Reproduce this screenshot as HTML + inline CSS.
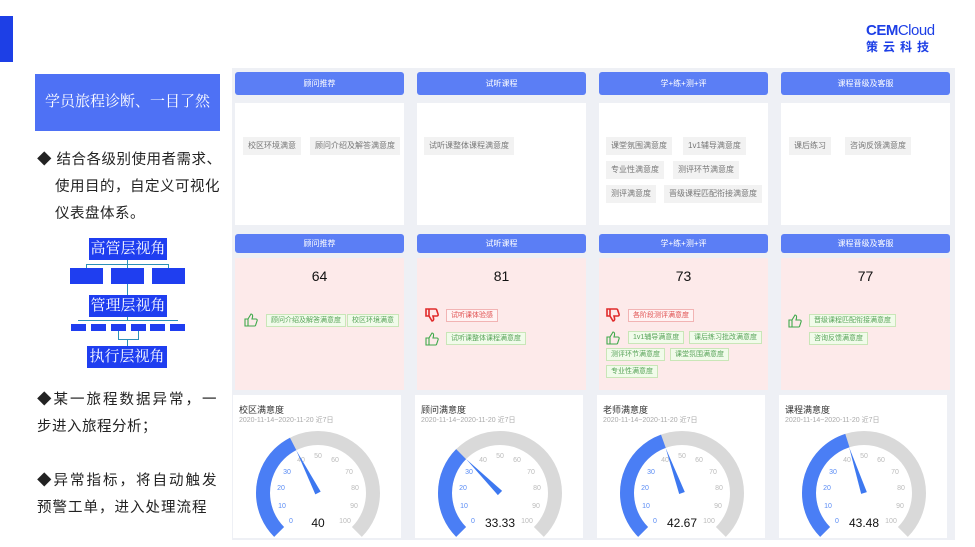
<!DOCTYPE html><html><head><meta charset="utf-8"><style>
*{margin:0;padding:0;box-sizing:border-box}
body{width:975px;height:547px;position:relative;background:#fff;font-family:"Liberation Sans","Noto Sans CJK SC",sans-serif;overflow:hidden}
.a{position:absolute}
.hd{position:absolute;height:23px;background:#5b7ef5;border-radius:3px;color:#fff;font-size:8px;text-align:center;line-height:23px}
.hd2{height:19px;line-height:19px}
.wc{position:absolute;background:#fff}
.pc{position:absolute;background:#fdeaea}
.tg{position:absolute;background:#f2f2f2;color:#777;font-size:8px;height:18px;line-height:18px;padding:0 5px;white-space:nowrap}
.gt{position:absolute;background:#f1fbea;border:1px solid #c9e6b8;color:#59a45a;font-size:7px;height:13px;line-height:11px;padding:0 4px;white-space:nowrap}
.rt{position:absolute;background:#fff3f3;border:1px solid #f2b4b4;color:#e05050;font-size:7px;height:13px;line-height:11px;padding:0 4px;white-space:nowrap}
.num{position:absolute;width:169px;text-align:center;font-size:14px;color:#111}
.lt{position:absolute;font-size:14.5px;color:#222;letter-spacing:0.5px;white-space:nowrap}
.ob{position:absolute;background:#1f3ef0;color:#fff;font-family:"Liberation Serif","Noto Serif CJK SC",serif;font-size:15px;text-align:center}
.sb{position:absolute;background:#1f3ef0}
.ln{position:absolute;background:#2a8fb8}
.gc{position:absolute;background:#fff;width:168px;height:143px}
.gtit{position:absolute;left:6px;top:8px;font-size:9px;color:#333}
.gd{position:absolute;left:6px;top:20px;font-size:7px;color:#aaa}
</style></head><body>
<div class="a" style="left:0;top:16px;width:13px;height:46px;background:#1d3fe6"></div>
<div class="a" style="left:866px;top:22px;font-size:15px;font-weight:bold;color:#1d3fe6;letter-spacing:-0.5px">CEM<span style="font-weight:normal">Cloud</span></div>
<div class="a" style="left:866px;top:38px;font-size:12px;color:#1d3fe6;letter-spacing:5px;font-weight:bold">策云科技</div>

<div class="a" style="left:35px;top:74px;width:185px;height:57px;background:#4e71f5;color:#fff;font-size:15px;line-height:57px;text-align:center;font-family:'Liberation Serif','Noto Serif CJK SC',serif">学员旅程诊断、一目了然</div>

<div class="lt" style="left:37px;top:148px">◆ 结合各级别使用者需求、</div>
<div class="lt" style="left:55px;top:175px">使用目的，自定义可视化</div>
<div class="lt" style="left:55px;top:202px">仪表盘体系。</div>
<div class="lt" style="left:37px;top:388px;letter-spacing:2px">◆某一旅程数据异常，一</div>
<div class="lt" style="left:37px;top:415px">步进入旅程分析；</div>
<div class="lt" style="left:37px;top:469px;letter-spacing:2px">◆异常指标，将自动触发</div>
<div class="lt" style="left:37px;top:496px;letter-spacing:1px">预警工单，进入处理流程</div>

<div class="ln" style="left:86px;top:264px;width:83px;height:1px"></div>
<div class="ln" style="left:86px;top:264px;width:1px;height:5px"></div>
<div class="ln" style="left:127px;top:258px;width:1px;height:11px"></div>
<div class="ln" style="left:168px;top:264px;width:1px;height:5px"></div>
<div class="ln" style="left:127px;top:283px;width:1px;height:13px"></div>
<div class="ln" style="left:78px;top:320px;width:100px;height:1px"></div>
<div class="ln" style="left:127px;top:316px;width:1px;height:5px"></div>
<div class="ln" style="left:118px;top:331px;width:1px;height:8px"></div>
<div class="ln" style="left:138px;top:331px;width:1px;height:8px"></div>
<div class="ln" style="left:118px;top:339px;width:21px;height:1px"></div>
<div class="ln" style="left:127px;top:339px;width:1px;height:8px"></div>
<div class="ob" style="left:89px;top:238px;width:78px;height:22px;line-height:22px">高管层视角</div>
<div class="sb" style="left:70px;top:268px;width:33px;height:16px"></div>
<div class="sb" style="left:111px;top:268px;width:33px;height:16px"></div>
<div class="sb" style="left:152px;top:268px;width:33px;height:16px"></div>
<div class="ob" style="left:89px;top:295px;width:78px;height:22px;line-height:22px">管理层视角</div>
<div class="sb" style="left:71px;top:324px;width:15px;height:7px"></div>
<div class="sb" style="left:91px;top:324px;width:15px;height:7px"></div>
<div class="sb" style="left:111px;top:324px;width:15px;height:7px"></div>
<div class="sb" style="left:131px;top:324px;width:15px;height:7px"></div>
<div class="sb" style="left:150px;top:324px;width:15px;height:7px"></div>
<div class="sb" style="left:170px;top:324px;width:15px;height:7px"></div>
<div class="ob" style="left:87px;top:346px;width:80px;height:22px;line-height:22px">执行层视角</div>

<div class="a" style="left:232px;top:68px;width:723px;height:472px;background:#eef0f5"></div>
<div class="hd" style="left:235px;top:72px;width:169px">顾问推荐</div>
<div class="hd" style="left:417px;top:72px;width:169px">试听课程</div>
<div class="hd" style="left:599px;top:72px;width:169px">学+练+测+评</div>
<div class="hd" style="left:781px;top:72px;width:169px">课程晋级及客服</div>
<div class="wc" style="left:235px;top:103px;width:169px;height:122px"></div>
<div class="wc" style="left:417px;top:103px;width:169px;height:122px"></div>
<div class="wc" style="left:599px;top:103px;width:169px;height:122px"></div>
<div class="wc" style="left:781px;top:103px;width:169px;height:122px"></div>
<div class="tg" style="left:243px;top:137px">校区环境满意</div>
<div class="tg" style="left:310px;top:137px">顾问介绍及解答满意度</div>
<div class="tg" style="left:424px;top:137px">试听课整体课程满意度</div>
<div class="tg" style="left:606px;top:137px">课堂氛围满意度</div>
<div class="tg" style="left:683px;top:137px">1v1辅导满意度</div>
<div class="tg" style="left:606px;top:161px">专业性满意度</div>
<div class="tg" style="left:673px;top:161px">测评环节满意度</div>
<div class="tg" style="left:606px;top:185px">测评满意度</div>
<div class="tg" style="left:664px;top:185px">晋级课程匹配衔接满意度</div>
<div class="tg" style="left:789px;top:137px">课后练习</div>
<div class="tg" style="left:845px;top:137px">咨询反馈满意度</div>

<div class="hd hd2" style="left:235px;top:234px;width:169px">顾问推荐</div>
<div class="hd hd2" style="left:417px;top:234px;width:169px">试听课程</div>
<div class="hd hd2" style="left:599px;top:234px;width:169px">学+练+测+评</div>
<div class="hd hd2" style="left:781px;top:234px;width:169px">课程晋级及客服</div>
<div class="pc" style="left:235px;top:258px;width:169px;height:132px"></div>
<div class="pc" style="left:417px;top:258px;width:169px;height:132px"></div>
<div class="pc" style="left:599px;top:258px;width:169px;height:132px"></div>
<div class="pc" style="left:781px;top:258px;width:169px;height:132px"></div>
<div class="num" style="left:235px;top:268px">64</div>
<div class="num" style="left:417px;top:268px">81</div>
<div class="num" style="left:599px;top:268px">73</div>
<div class="num" style="left:781px;top:268px">77</div>

<svg class="a" style="left:0;top:0" width="975" height="547">
<defs>
<g id="up"><path d="M1 6h3v7H1z M4 6l3-5c1 0 2 1 1.5 3L8 6h4c1 0 1.5 1 1 2l-1.5 4.5c-.3.5-.7.5-1 .5H4" fill="none" stroke="#3ea84a" stroke-width="1.1"/></g>
<g id="dn"><path d="M1 1h3v7H1z M4 8l3 5c1 0 2-1 1.5-3L8 8h4c1 0 1.5-1 1-2L11.5 1.5C11.2 1 10.8 1 10.5 1H4" fill="none" stroke="#e02a2a" stroke-width="1.6"/></g>
<g id="lb" font-family="Liberation Sans" font-size="7" text-anchor="middle">
<text x="-27" y="30" fill="#5a8cf5">0</text><text x="-36" y="15" fill="#5a8cf5">10</text><text x="-37" y="-3" fill="#5a8cf5">20</text><text x="-31" y="-19" fill="#5a8cf5">30</text>
<text x="-17" y="-31" fill="#bbb">40</text><text x="0" y="-35" fill="#bbb">50</text><text x="17" y="-31" fill="#bbb">60</text><text x="31" y="-19" fill="#bbb">70</text>
<text x="37" y="-3" fill="#bbb">80</text><text x="36" y="15" fill="#bbb">90</text><text x="27" y="30" fill="#bbb">100</text>
</g>
</defs>
<use href="#up" x="244" y="313"/>
<use href="#dn" x="425" y="308"/>
<use href="#up" x="425" y="332"/>
<use href="#dn" x="606" y="308"/>
<use href="#up" x="606" y="331"/>
<use href="#up" x="788" y="314"/>
</svg>
<div class="gt" style="left:266px;top:314px">顾问介绍及解答满意度</div>
<div class="gt" style="left:347px;top:314px">校区环境满意</div>
<div class="rt" style="left:446px;top:309px">试听课体验感</div>
<div class="gt" style="left:446px;top:332px">试听课整体课程满意度</div>
<div class="rt" style="left:628px;top:309px">各阶段测评满意度</div>
<div class="gt" style="left:628px;top:331px">1v1辅导满意度</div>
<div class="gt" style="left:689px;top:331px">课后练习批改满意度</div>
<div class="gt" style="left:606px;top:348px">测评环节满意度</div>
<div class="gt" style="left:670px;top:348px">课堂氛围满意度</div>
<div class="gt" style="left:606px;top:365px">专业性满意度</div>
<div class="gt" style="left:809px;top:314px">晋级课程匹配衔接满意度</div>
<div class="gt" style="left:809px;top:332px">咨询反馈满意度</div>

<div class="gc" style="left:233px;top:395px"><div class="gtit">校区满意度</div><div class="gd">2020-11-14~2020-11-20 近7日</div></div>
<div class="gc" style="left:415px;top:395px"><div class="gtit">顾问满意度</div><div class="gd">2020-11-14~2020-11-20 近7日</div></div>
<div class="gc" style="left:597px;top:395px"><div class="gtit">老师满意度</div><div class="gd">2020-11-14~2020-11-20 近7日</div></div>
<div class="gc" style="left:779px;top:395px"><div class="gtit">课程满意度</div><div class="gd">2020-11-14~2020-11-20 近7日</div></div>

<svg class="a" style="left:0;top:0" width="975" height="547" font-family="Liberation Sans">
<g transform="translate(318,493)">
<circle r="55" fill="none" stroke="#d9d9d9" stroke-width="14" stroke-dasharray="259 400" transform="rotate(135)"/>
<circle r="55" fill="none" stroke="#4a7ef5" stroke-width="14" stroke-dasharray="103.7 400" transform="rotate(135)"/>
<use href="#lb"/>
<polygon points="-3,0 3,0 0,-48" fill="#3d78f0" transform="rotate(-27)"/>
<text x="0" y="34" font-size="12" fill="#111" text-anchor="middle">40</text>
</g>
<g transform="translate(500,493)">
<circle r="55" fill="none" stroke="#d9d9d9" stroke-width="14" stroke-dasharray="259 400" transform="rotate(135)"/>
<circle r="55" fill="none" stroke="#4a7ef5" stroke-width="14" stroke-dasharray="86.3 400" transform="rotate(135)"/>
<use href="#lb"/>
<polygon points="-3,0 3,0 0,-48" fill="#3d78f0" transform="rotate(-45)"/>
<text x="0" y="34" font-size="12" fill="#111" text-anchor="middle">33.33</text>
</g>
<g transform="translate(682,493)">
<circle r="55" fill="none" stroke="#d9d9d9" stroke-width="14" stroke-dasharray="259 400" transform="rotate(135)"/>
<circle r="55" fill="none" stroke="#4a7ef5" stroke-width="14" stroke-dasharray="110.5 400" transform="rotate(135)"/>
<use href="#lb"/>
<polygon points="-3,0 3,0 0,-48" fill="#3d78f0" transform="rotate(-20)"/>
<text x="0" y="34" font-size="12" fill="#111" text-anchor="middle">42.67</text>
</g>
<g transform="translate(864,493)">
<circle r="55" fill="none" stroke="#d9d9d9" stroke-width="14" stroke-dasharray="259 400" transform="rotate(135)"/>
<circle r="55" fill="none" stroke="#4a7ef5" stroke-width="14" stroke-dasharray="112.6 400" transform="rotate(135)"/>
<use href="#lb"/>
<polygon points="-3,0 3,0 0,-48" fill="#3d78f0" transform="rotate(-18)"/>
<text x="0" y="34" font-size="12" fill="#111" text-anchor="middle">43.48</text>
</g>
</svg>
</body></html>
